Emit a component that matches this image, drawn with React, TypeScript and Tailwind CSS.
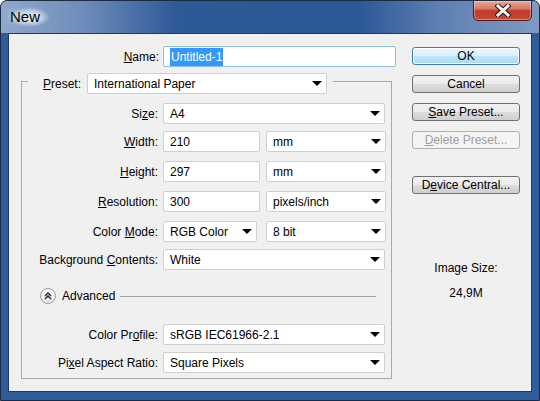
import React from "react";

const btn =
  "flex h-[18px] w-[108px] items-center justify-center rounded-[3px] border border-[#707070] bg-[linear-gradient(180deg,#f2f2f2_0%,#ebebeb_50%,#dddddd_51%,#cfcfcf_100%)] text-black";

function Arrow() {
  return <span className="ml-auto mr-[4px] h-0 w-0 border-x-[5px] border-t-[5px] border-x-transparent border-t-black" />;
}

function Select({ value, w }: { value: string; w: string }) {
  return (
    <div className={`flex h-[21px] items-center rounded-[2px] border border-[#cfcfcf] bg-white pl-[6px] ${w}`}>
      <span>{value}</span>
      <Arrow />
    </div>
  );
}

function Input({ value, w }: { value: string; w: string }) {
  return (
    <div className={`flex h-[21px] items-center rounded-[2px] border border-[#cfcfcf] bg-white pl-[6px] ${w}`}>
      {value}
    </div>
  );
}

function Row({ label, mt, children }: { label: React.ReactNode; mt: string; children: React.ReactNode }) {
  return (
    <div className={`flex items-center ${mt}`}>
      <div className="w-[137px] pr-[1px] text-right">{label}</div>
      <div className="ml-[4px] flex gap-[6px]">{children}</div>
    </div>
  );
}

export default function App() {
  return (
    <div className="relative flex h-[401px] w-[540px] flex-col overflow-hidden rounded-t-[7px] border border-[#1c2b40] bg-[#2f5d9b] font-['Liberation_Sans',Arial,sans-serif] text-[12px] text-black">
      {/* title bar */}
      <div className="flex h-[32px] shrink-0 items-start bg-[linear-gradient(90deg,#8fa9cc_0%,#6f8dbb_15%,#2d5997_33%,#2b5796_66%,#5f80b3_82%,#7f9bc4_100%)] pl-[8px] pt-[6px]">
        <span className="rounded-full bg-[radial-gradient(closest-side,#dfe8f3_0%,#b8cae0_60%,transparent_100%)] px-[10px] text-[15px] leading-[20px] text-black [text-shadow:0_0_6px_#ffffff]">
          <span className="-ml-[9px]">New</span>
        </span>
      </div>

      {/* close button */}
      <div className="absolute right-[7px] top-[-1px] flex h-[21px] w-[59px] items-center justify-center rounded-b-[5px] border border-[#4d1a15] bg-[linear-gradient(180deg,#e7a797_0%,#d7796a_40%,#c23a2c_52%,#c64a36_100%)] shadow-[inset_0_0_0_1px_rgba(255,255,255,0.35)]">
        <svg width="16" height="13" viewBox="0 0 16 13">
          <path d="M3 2 L13 11 M13 2 L3 11" stroke="#3b1410" strokeWidth="5" strokeLinecap="square" />
          <path d="M3 2 L13 11 M13 2 L3 11" stroke="#ffffff" strokeWidth="3" strokeLinecap="square" />
        </svg>
      </div>

      {/* client area */}
      <div className="mx-[7px] flex h-[359px] shrink-0 border border-[#24385a] bg-[#f0f0f0]">
        {/* left column */}
        <div className="w-[402px] shrink-0">
          <div className="mt-[12px] flex items-center">
            <div className="w-[150px] text-right">
              <span className="underline">N</span>ame:
            </div>
            <div className="ml-[4px] flex h-[21px] w-[233px] items-center rounded-[2px] border border-[#8ebbe6] bg-white pl-[6px]">
              <span className="bg-[#3399ff] px-[1px] text-white">Untitled-1</span>
            </div>
          </div>

          <fieldset className="ml-[12px] mt-[6px] w-[371px] border border-[#a9a9a9] pb-[5px]">
            <legend className="ml-[6px] flex h-[16px] items-start pl-[15px] pr-[6px]">
              <div className="flex h-[21px] items-center">
                <span>
                  <span className="underline">P</span>reset:
                </span>
                <Select value="International Paper" w="ml-[6px] w-[240px]" />
              </div>
            </legend>

            <Row mt="mt-[14px]" label={<>Si<span className="underline">z</span>e:</>}>
              <Select value="A4" w="w-[222px]" />
            </Row>
            <Row mt="mt-[7px]" label={<><span className="underline">W</span>idth:</>}>
              <Input value="210" w="w-[97px]" />
              <Select value="mm" w="w-[120px]" />
            </Row>
            <Row mt="mt-[9px]" label={<><span className="underline">H</span>eight:</>}>
              <Input value="297" w="w-[97px]" />
              <Select value="mm" w="w-[120px]" />
            </Row>
            <Row mt="mt-[9px]" label={<><span className="underline">R</span>esolution:</>}>
              <Input value="300" w="w-[97px]" />
              <Select value="pixels/inch" w="w-[120px]" />
            </Row>
            <Row mt="mt-[9px]" label={<>Color <span className="underline">M</span>ode:</>}>
              <Select value="RGB Color" w="w-[94px]" />
              <div className="ml-[3px]">
                <Select value="8 bit" w="w-[120px]" />
              </div>
            </Row>
            <div className="mt-[7px] flex items-center">
              <div className="w-[137px] pr-[1px] text-right">
                Background <span className="underline">C</span>ontents:
              </div>
              <div className="ml-[4px]">
                <Select value="White" w="w-[222px]" />
              </div>
            </div>

            {/* advanced */}
            <div className="ml-[18px] mr-[15px] mt-[18px] flex h-[16px] items-center">
              <div className="flex h-[16px] w-[16px] items-center justify-center rounded-full border border-[#9a9a9a] bg-[linear-gradient(180deg,#ffffff_0%,#e4e4e4_100%)]">
                <svg width="8" height="8" viewBox="0 0 8 8">
                  <path d="M1 4 L4 1 L7 4 M1 7 L4 4 L7 7" stroke="#222" strokeWidth="1.3" fill="none" />
                </svg>
              </div>
              <span className="ml-[6px]">Advanced</span>
              <div className="ml-[5px] h-px flex-1 bg-[#a0a0a0]" />
            </div>

            <Row mt="mt-[20px]" label={<>Color Pr<span className="underline">o</span>file:</>}>
              <Select value="sRGB IEC61966-2.1" w="w-[222px]" />
            </Row>
            <Row mt="mt-[7px]" label={<>Pi<span className="underline">x</span>el Aspect Ratio:</>}>
              <Select value="Square Pixels" w="w-[222px]" />
            </Row>
          </fieldset>
        </div>

        {/* right column */}
        <div className="ml-[1px] flex w-[108px] flex-col">
          <div className="mt-[13px] flex h-[18px] w-[108px] items-center justify-center rounded-[3px] border border-[#3c7fb1] bg-[linear-gradient(180deg,#eaf6fd_0%,#d9f0fc_50%,#bee6fd_51%,#a7d9f5_100%)] shadow-[inset_0_0_0_1px_#ffffff]">
            OK
          </div>
          <div className={`mt-[10px] ${btn}`}>Cancel</div>
          <div className={`mt-[10px] ${btn}`}>
            <span>
              <span className="underline">S</span>ave Preset...
            </span>
          </div>
          <div className="mt-[10px] flex h-[18px] w-[108px] items-center justify-center rounded-[3px] border border-[#adb2b5] bg-[#f4f4f4] text-[#a0a0a0]">
            <span>
              <span className="underline">D</span>elete Preset...
            </span>
          </div>
          <div className={`mt-[27px] ${btn}`}>
            <span>
              D<span className="underline">e</span>vice Central...
            </span>
          </div>
          <div className="mt-[67px] text-center leading-[14px]">Image Size:</div>
          <div className="mt-[11px] text-center leading-[14px]">24,9M</div>
        </div>
      </div>
    </div>
  );
}
